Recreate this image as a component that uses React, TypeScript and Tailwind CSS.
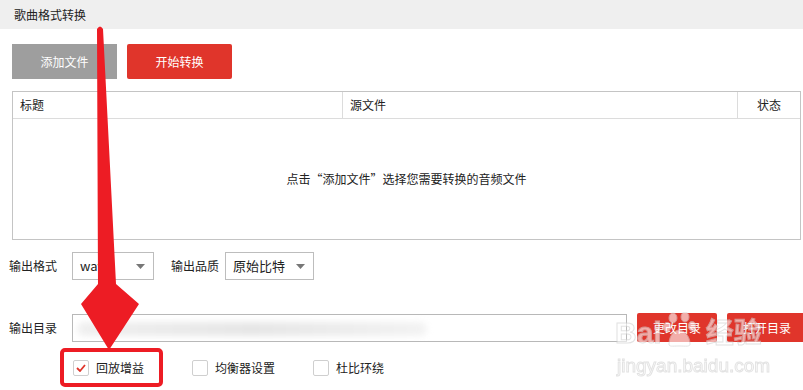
import React from "react";

const font = { fontFamily: '"Noto Sans CJK SC", "Noto Sans", sans-serif' };

function Select({ w, text }: { w: string; text: string }) {
  return (
    <div className={`${w} shrink-0 h-[28px] border border-[#bdbdbd] bg-white flex items-center justify-between pl-[7px] pr-[8px]`}>
      <span className="text-[13px] text-[#222]">{text}</span>
      <svg width="9" height="5" viewBox="0 0 9 5"><path d="M0 0h9L4.5 5z" fill="#777" /></svg>
    </div>
  );
}

function Check({ checked, label, ml }: { checked?: boolean; label: string; ml: string }) {
  return (
    <div className={`flex items-center shrink-0 ${ml}`}>
      <div className="w-[16px] h-[16px] border border-[#cfcfcf] rounded-[2px] bg-white flex items-center justify-center">
        {checked && (
          <svg width="10" height="8" viewBox="0 0 10 8"><path d="M1 4l3 3 5-6" stroke="#e0352b" strokeWidth="1.8" fill="none" /></svg>
        )}
      </div>
      <span className="ml-[7px] text-[12px] text-[#222]">{label}</span>
    </div>
  );
}

export default function App() {
  return (
    <div className="relative w-[803px] h-[390px] overflow-hidden bg-white" style={font}>
      <div className="h-[29px] bg-[#efefef] flex items-center pl-[14px] text-[12px] text-[#222]">歌曲格式转换</div>

      <div className="pl-[12px] mt-[15px] flex gap-[10px]">
        <div className="w-[105px] h-[35px] bg-[#9e9e9e] text-white text-[12px] flex items-center justify-center">添加文件</div>
        <div className="w-[105px] h-[35px] bg-[#e0352b] rounded-[2px] text-white text-[12px] flex items-center justify-center">开始转换</div>
      </div>

      <div className="ml-[12px] mt-[12px] w-[789px] h-[149px] border border-[#c4c4c4] flex flex-col">
        <div className="h-[27px] flex border-b border-[#dcdcdc] text-[12px] text-[#222] shrink-0">
          <div className="w-[330px] border-r border-[#dcdcdc] flex items-center pl-[7px]">标题</div>
          <div className="w-[395px] border-r border-[#dcdcdc] flex items-center pl-[7px]">源文件</div>
          <div className="flex-1 flex items-center justify-center">状态</div>
        </div>
        <div className="flex-1 flex items-center justify-center text-[12px] text-[#222]">
          点击“添加文件”选择您需要转换的音频文件
        </div>
      </div>

      <div className="pl-[9px] mt-[12px] flex items-center">
        <span className="text-[12px] text-[#222] w-[63px] shrink-0">输出格式</span>
        <Select w="w-[82px]" text="wav" />
        <span className="text-[12px] text-[#222] ml-[17px] w-[54px] shrink-0">输出品质</span>
        <Select w="w-[89px]" text="原始比特" />
      </div>

      <div className="pl-[9px] mt-[33px] flex items-center">
        <span className="text-[12px] text-[#222] w-[63px] shrink-0">输出目录</span>
        <div className="relative w-[555px] shrink-0 h-[28px] border border-[#b8b8b8] bg-white overflow-hidden">
          <div className="absolute left-[4px] top-[7px] w-[350px] h-[14px] rounded-full bg-gradient-to-r from-[#f0f0f0] via-[#e6e6e6] to-[#f3f3f3] blur-[3px]" />
        </div>
        <div className="ml-[10px] w-[80px] h-[29px] shrink-0 bg-[#e0352b] rounded-[2px] text-white text-[12px] flex items-center justify-center">更改目录</div>
        <div className="ml-[10px] w-[80px] h-[29px] bg-[#e0352b] rounded-[2px] text-white text-[12px] flex items-center justify-center shrink-0">打开目录</div>
      </div>

      <div className="mt-[17px] flex items-center">
        <Check checked label="回放增益" ml="ml-[73px]" />
        <Check label="均衡器设置" ml="ml-[48px]" />
        <Check label="杜比环绕" ml="ml-[38px]" />
      </div>

      {/* Baidu watermark */}
      <div className="absolute left-[615px] top-[312px] flex items-end text-[30px] font-bold leading-none text-white opacity-60 [-webkit-text-stroke:1px_#d0d0d0]" style={{ fontFamily: '"Liberation Sans", "Noto Sans CJK SC", sans-serif' }}>
        <span>Bai</span>
        <svg width="36" height="36" viewBox="0 0 36 36" className="mx-[1px]">
          <g fill="white" stroke="#d0d0d0" strokeWidth="1">
            <ellipse cx="10" cy="6" rx="4" ry="5" />
            <ellipse cx="22" cy="5" rx="4" ry="5" />
            <ellipse cx="4" cy="15" rx="3.5" ry="4.5" />
            <ellipse cx="29" cy="14" rx="3.5" ry="4.5" />
            <path d="M6 32c0-9 6-14 10-14s11 5 11 14c0 3-4 2-11 2S6 35 6 32z" />
          </g>
        </svg>
        <span className="ml-[6px] text-[28px]">经验</span>
      </div>
      <div className="absolute left-[617px] top-[352px] text-[19px] text-white opacity-60 [-webkit-text-stroke:1px_#d0d0d0]" style={{ fontFamily: '"Liberation Sans", sans-serif' }}>
        jingyan.baidu.com
      </div>

      {/* annotation overlay */}
      <svg className="absolute left-0 top-0 pointer-events-none" width="803" height="390" viewBox="0 0 803 390">
        <rect x="62" y="350" width="99" height="35" rx="3" fill="none" stroke="#ed1c24" strokeWidth="4" />
        <path d="M97 29 Q100 24 103 29 L116 284 L139 304 L109 350 L81 304 L98 284 Z" fill="#ed1c24" />
      </svg>
    </div>
  );
}
